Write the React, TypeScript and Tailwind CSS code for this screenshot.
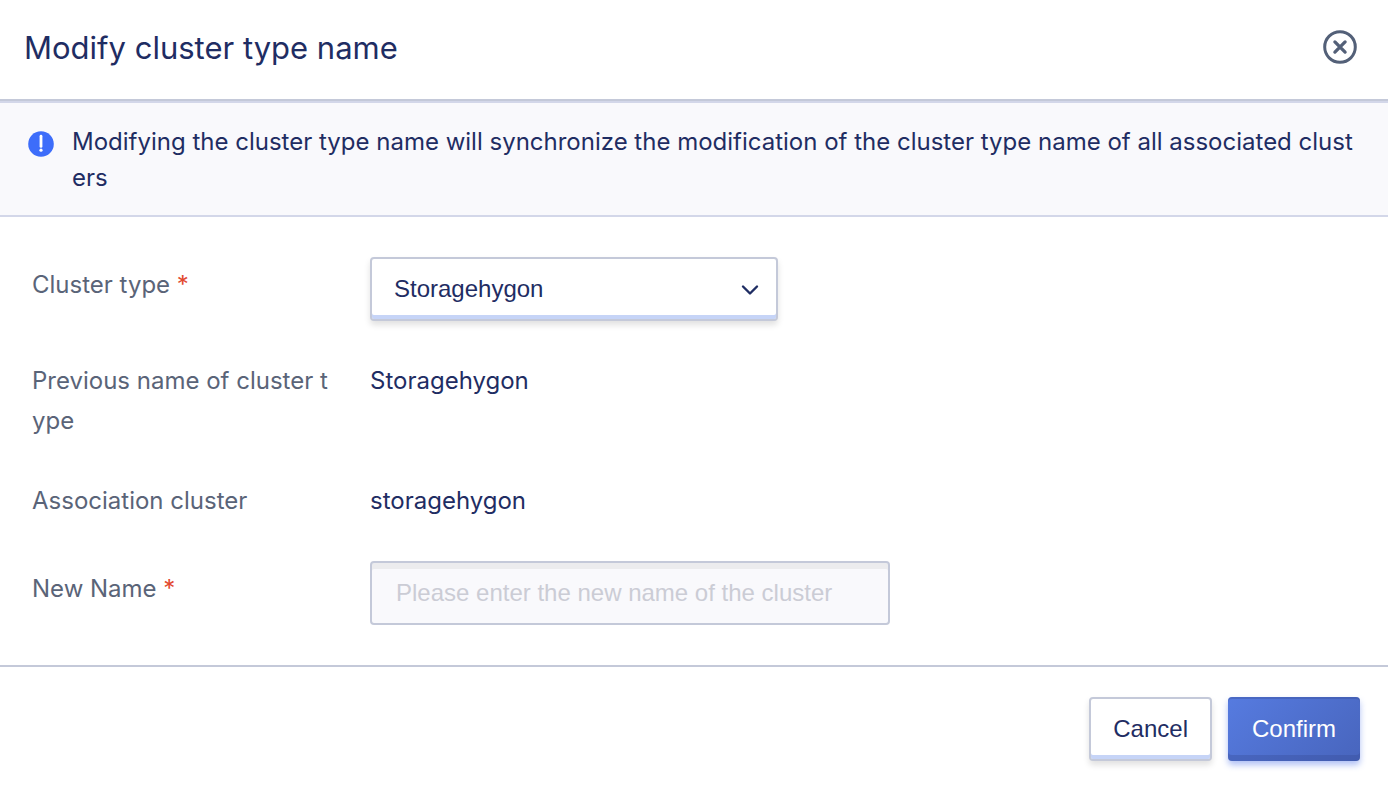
import type { ReactNode } from 'react';

type RowProps = {
  label: string;
  htmlFor?: string;
  required?: boolean;
  children: ReactNode;
};

function Row({ label, htmlFor, required, children }: RowProps) {
  const content = (
    <>
      {label}
      {required && <span className="text-[#e2492f]"> *</span>}
    </>
  );
  const style = 'block w-[306px] shrink-0 break-all text-[#5a6478]';
  return (
    <div className="flex gap-8 text-2xl leading-10">
      {htmlFor ? (
        <label htmlFor={htmlFor} className={`${style} pt-2`}>
          {content}
        </label>
      ) : (
        <span className={style}>{content}</span>
      )}
      {children}
    </div>
  );
}

export default function App() {
  return (
    <main className="bg-white font-['Inter',sans-serif] text-[#1f2d63]">
      <header className="flex items-center justify-between border-b-2 border-[#c4c9d9] pt-6 pr-[30px] pb-[27px] pl-6">
        <h1 className="text-[31px] leading-12">Modify cluster type name</h1>
        <button type="button" aria-label="Close" className="text-[#536078]">
          <svg width="36" height="36" viewBox="0 0 36 36" fill="none" stroke="currentColor" strokeWidth="3">
            <circle cx="18" cy="17" r="15.3" />
            <path d="M12.9 11.9l10.2 10.2M23.1 11.9L12.9 22.1" strokeWidth="3.3" strokeLinecap="round" />
          </svg>
        </button>
      </header>

      <div className="flex gap-[18px] border-y-2 border-[#d3d7e9] bg-[#f9f9fc] px-7 pt-[21px] pb-[19px]">
        <svg className="mt-[7px] shrink-0" width="26" height="26" viewBox="0 0 26 26">
          <circle cx="13" cy="13" r="12.8" fill="#3d6dfa" />
          <path d="M13 5.2v10.2" stroke="#fff" strokeWidth="2.8" strokeLinecap="round" />
          <circle cx="13" cy="19.2" r="1.6" fill="#fff" />
        </svg>
        <p className="text-2xl leading-9 break-all">
          Modifying the cluster type name will synchronize the modification of the cluster type name of all associated
          clusters
        </p>
      </div>

      <form id="rename" className="flex flex-col gap-10 border-b-2 border-[#c4c9d9] px-8 py-10">
        <Row label="Cluster type" htmlFor="cluster-type" required>
          <div className="relative w-[408px]">
            <select
              id="cluster-type"
              className="block h-16 w-full appearance-none rounded-sm border-2 border-[#c4c9d9] bg-white pl-[22px] font-['Liberation_Sans',sans-serif] text-2xl leading-7 shadow-[inset_0_-4px_0_#c6d4f7,0_4px_6px_rgba(0,0,0,0.12)]"
            >
              <option>Storagehygon</option>
            </select>
            <svg
              className="pointer-events-none absolute top-6 right-[18px]"
              width="20"
              height="20"
              viewBox="0 0 20 20"
              fill="none"
              stroke="currentColor"
              strokeWidth="2.4"
              strokeLinecap="round"
              strokeLinejoin="round"
            >
              <path d="M3 5.5l7 7 7-7" />
            </svg>
          </div>
        </Row>
        <Row label="Previous name of cluster type">
          <span>Storagehygon</span>
        </Row>
        <Row label="Association cluster">
          <span>storagehygon</span>
        </Row>
        <Row label="New Name" htmlFor="new-name" required>
          <input
            id="new-name"
            type="text"
            placeholder="Please enter the new name of the cluster"
            className="h-16 w-[520px] rounded-sm border-2 border-[#c4c9d9] bg-[#f9f9fc] px-6 font-['Liberation_Sans',sans-serif] text-2xl leading-7 shadow-[inset_0_6px_0_#ececee] placeholder:text-[#cbccd5]"
          />
        </Row>
      </form>

      <footer className="flex justify-end gap-4 px-7 pt-[30px] pb-6 font-['Liberation_Sans',sans-serif] text-2xl">
        <button
          type="button"
          className="h-16 rounded-sm border-2 border-[#c4c9d9] bg-white px-[22px] shadow-[inset_0_-4px_0_#c6d4f7,0_4px_6px_rgba(0,0,0,0.12)]"
        >
          Cancel
        </button>
        <button
          type="submit"
          form="rename"
          className="h-16 rounded-sm bg-linear-135 from-[#567be0] to-[#4865bd] px-6 text-white shadow-[inset_0_2px_0_rgba(55,75,150,0.35),inset_0_-6px_0_rgba(55,75,150,0.35),0_4px_6px_rgba(61,99,230,0.4)]"
        >
          Confirm
        </button>
      </footer>
    </main>
  );
}
